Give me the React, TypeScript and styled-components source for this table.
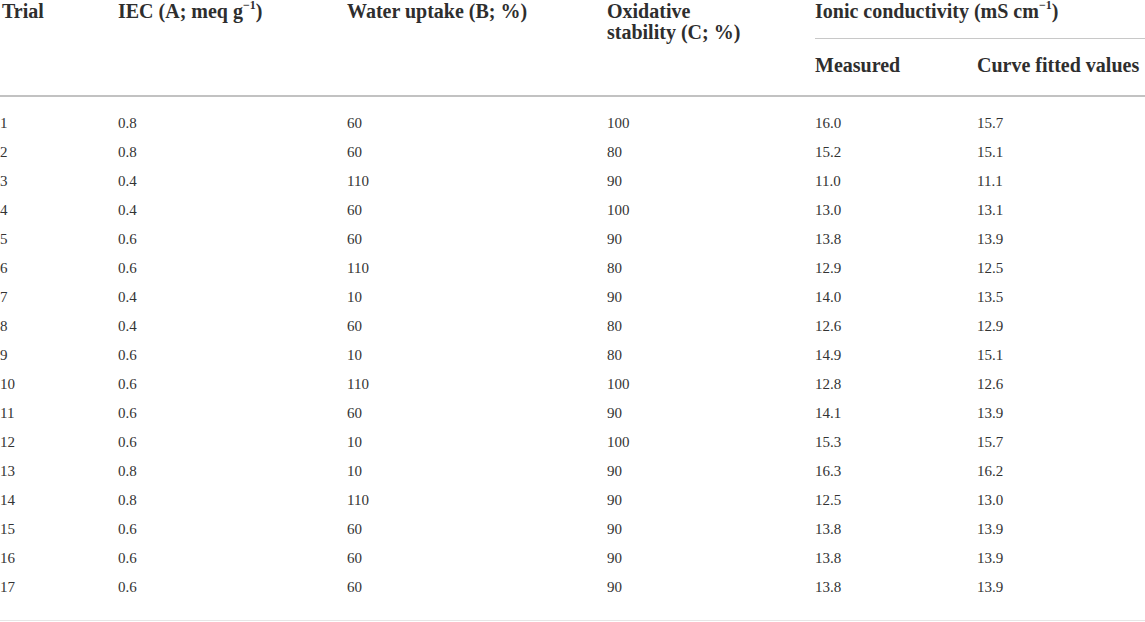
import React from 'react';
import styled, { createGlobalStyle } from 'styled-components';

const GlobalStyle = createGlobalStyle`
  html, body {
    margin: 0;
    padding: 0;
    background: #ffffff;
  }
  body {
    font-family: 'Liberation Serif', 'Times New Roman', serif;
    color: #333333;
    overflow: hidden;
  }
`;

const Table = styled.table`
  width: 1160px;
  border-collapse: collapse;
  table-layout: fixed;
  border-bottom: 1px solid #e6e6e6;
`;

const HeadCell = styled.th<{ $top?: boolean; $sub?: boolean }>`
  text-align: left;
  vertical-align: top;
  font-weight: 700;
  font-size: 20px;
  line-height: 21px;
  color: #2e2e2e;
  padding: ${(p) => (p.$top ? '1px 0 16px 0' : p.$sub ? '16px 0 19px 0' : '1px 0 0 0')};
  white-space: nowrap;
`;

const SpanHead = styled(HeadCell)`
  border-bottom: 1px solid #c8c8c8;
`;

const HeadRow = styled.tr`
  &:last-child {
    border-bottom: 2px solid #c2c2c2;
  }
`;

const Cell = styled.td`
  font-size: 15px;
  line-height: 16px;
  padding: 6.5px 0;
  vertical-align: middle;
  white-space: nowrap;
`;

const BodyRow = styled.tr`
  &:first-child td {
    padding-top: 18px;
  }
  &:last-child td {
    padding-bottom: 25px;
  }
`;

const Sup = styled.sup`
  font-size: 0.6em;
  line-height: 0;
  position: relative;
  top: -0.1em;
`;

const rows: [string, string, string, string, string, string][] = [
  ['1', '0.8', '60', '100', '16.0', '15.7'],
  ['2', '0.8', '60', '80', '15.2', '15.1'],
  ['3', '0.4', '110', '90', '11.0', '11.1'],
  ['4', '0.4', '60', '100', '13.0', '13.1'],
  ['5', '0.6', '60', '90', '13.8', '13.9'],
  ['6', '0.6', '110', '80', '12.9', '12.5'],
  ['7', '0.4', '10', '90', '14.0', '13.5'],
  ['8', '0.4', '60', '80', '12.6', '12.9'],
  ['9', '0.6', '10', '80', '14.9', '15.1'],
  ['10', '0.6', '110', '100', '12.8', '12.6'],
  ['11', '0.6', '60', '90', '14.1', '13.9'],
  ['12', '0.6', '10', '100', '15.3', '15.7'],
  ['13', '0.8', '10', '90', '16.3', '16.2'],
  ['14', '0.8', '110', '90', '12.5', '13.0'],
  ['15', '0.6', '60', '90', '13.8', '13.9'],
  ['16', '0.6', '60', '90', '13.8', '13.9'],
  ['17', '0.6', '60', '90', '13.8', '13.9'],
];

const widths = [118, 229, 260, 208, 162, 183];

const App = () => (
  <>
    <GlobalStyle />
    <Table>
      <colgroup>
        {widths.map((w, i) => (
          <col key={i} style={{ width: w }} />
        ))}
      </colgroup>
      <thead>
        <HeadRow>
          <HeadCell rowSpan={2} style={{ paddingLeft: 2 }}>Trial</HeadCell>
          <HeadCell rowSpan={2}>
            IEC (A; meq g<Sup>−1</Sup>)
          </HeadCell>
          <HeadCell rowSpan={2}>Water uptake (B; %)</HeadCell>
          <HeadCell rowSpan={2}>
            Oxidative
            <br />
            stability (C; %)
          </HeadCell>
          <SpanHead colSpan={2} $top>
            Ionic conductivity (mS cm<Sup>−1</Sup>)
          </SpanHead>
        </HeadRow>
        <HeadRow>
          <HeadCell $sub>Measured</HeadCell>
          <HeadCell $sub>Curve fitted values</HeadCell>
        </HeadRow>
      </thead>
      <tbody>
        {rows.map((r) => (
          <BodyRow key={r[0]}>
            {r.map((v, i) => (
              <Cell key={i}>{v}</Cell>
            ))}
          </BodyRow>
        ))}
      </tbody>
    </Table>
  </>
);

export default App;
